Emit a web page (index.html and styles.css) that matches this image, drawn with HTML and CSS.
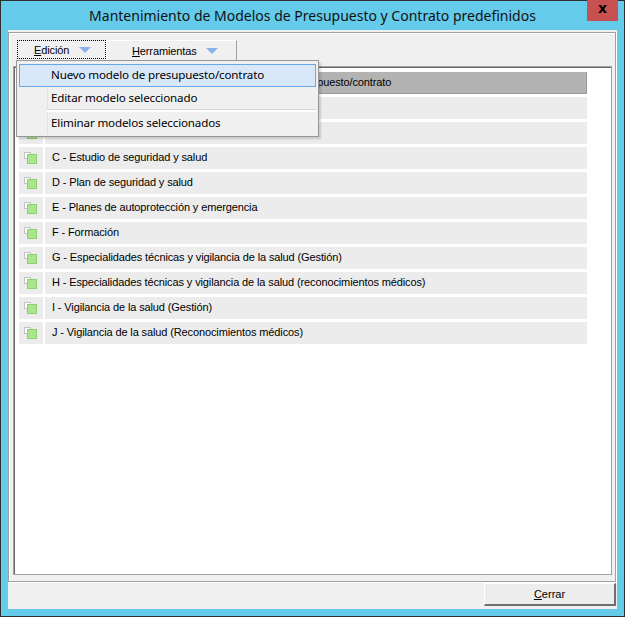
FILE: index.html
```html
<!DOCTYPE html>
<html>
<head>
  <title>Mantenimiento de Modelos</title>
  <link rel="stylesheet" href="styles.css">
</head>
<body>
  <div class="window">
    <div class="titlebar">
      <span class="title">Mantenimiento de Modelos de Presupuesto y Contrato predefinidos</span>
      <span class="close">x</span>
    </div>
    <div class="client">
      <div class="panel">
        <div class="toolbar">
          <div class="tool tool-open"><span><u>E</u>dición</span><i class="arrow"></i></div>
          <div class="tool tool-wide"><span><u>H</u>erramientas</span><i class="arrow"></i></div>
        </div>
        <div class="list">
          <div class="header"><span class="header-text">Modelo de presupuesto/contrato</span></div>
          <div class="rows">
            <div class="check"><svg width="13" height="12"><rect x="0.5" y="0.5" width="6" height="6" fill="#fff" stroke="#c4c4c4"/><rect x="3.5" y="2.5" width="9" height="9" fill="#a9e68f" stroke="#8ed06f"/></svg></div>
            <div class="name"></div>
            <div class="check"><svg width="13" height="12"><rect x="0.5" y="0.5" width="6" height="6" fill="#fff" stroke="#c4c4c4"/><rect x="3.5" y="2.5" width="9" height="9" fill="#a9e68f" stroke="#8ed06f"/></svg></div>
            <div class="name"></div>
            <div class="check"><svg width="13" height="12"><rect x="0.5" y="0.5" width="6" height="6" fill="#fff" stroke="#c4c4c4"/><rect x="3.5" y="2.5" width="9" height="9" fill="#a9e68f" stroke="#8ed06f"/></svg></div>
            <div class="name">C - Estudio de seguridad y salud</div>
            <div class="check"><svg width="13" height="12"><rect x="0.5" y="0.5" width="6" height="6" fill="#fff" stroke="#c4c4c4"/><rect x="3.5" y="2.5" width="9" height="9" fill="#a9e68f" stroke="#8ed06f"/></svg></div>
            <div class="name">D - Plan de seguridad y salud</div>
            <div class="check"><svg width="13" height="12"><rect x="0.5" y="0.5" width="6" height="6" fill="#fff" stroke="#c4c4c4"/><rect x="3.5" y="2.5" width="9" height="9" fill="#a9e68f" stroke="#8ed06f"/></svg></div>
            <div class="name">E - Planes de autoprotección y emergencia</div>
            <div class="check"><svg width="13" height="12"><rect x="0.5" y="0.5" width="6" height="6" fill="#fff" stroke="#c4c4c4"/><rect x="3.5" y="2.5" width="9" height="9" fill="#a9e68f" stroke="#8ed06f"/></svg></div>
            <div class="name">F - Formación</div>
            <div class="check"><svg width="13" height="12"><rect x="0.5" y="0.5" width="6" height="6" fill="#fff" stroke="#c4c4c4"/><rect x="3.5" y="2.5" width="9" height="9" fill="#a9e68f" stroke="#8ed06f"/></svg></div>
            <div class="name">G - Especialidades técnicas y vigilancia de la salud (Gestión)</div>
            <div class="check"><svg width="13" height="12"><rect x="0.5" y="0.5" width="6" height="6" fill="#fff" stroke="#c4c4c4"/><rect x="3.5" y="2.5" width="9" height="9" fill="#a9e68f" stroke="#8ed06f"/></svg></div>
            <div class="name">H - Especialidades técnicas y vigilancia de la salud (reconocimientos médicos)</div>
            <div class="check"><svg width="13" height="12"><rect x="0.5" y="0.5" width="6" height="6" fill="#fff" stroke="#c4c4c4"/><rect x="3.5" y="2.5" width="9" height="9" fill="#a9e68f" stroke="#8ed06f"/></svg></div>
            <div class="name">I - Vigilancia de la salud (Gestión)</div>
            <div class="check"><svg width="13" height="12"><rect x="0.5" y="0.5" width="6" height="6" fill="#fff" stroke="#c4c4c4"/><rect x="3.5" y="2.5" width="9" height="9" fill="#a9e68f" stroke="#8ed06f"/></svg></div>
            <div class="name">J - Vigilancia de la salud (Reconocimientos médicos)</div>
          </div>
        </div>

        <div class="menu">
          <div class="menu-item menu-hover">Nuevo modelo de presupuesto/contrato</div>
          <div class="menu-item">Editar modelo seleccionado</div>
          <div class="menu-sep"></div>
          <div class="menu-item">Eliminar modelos seleccionados</div>
        </div>
      </div>
      <div class="footer">
        <button class="button" type="button"><u>C</u>errar</button>
      </div>
    </div>
  </div>
</body>
</html>
```

FILE: styles.css
```css
body {
  margin: 0;
  background: #fff;
  font-family: "Liberation Sans", Arial, sans-serif;
  font-size: 11px;
  letter-spacing: -0.12px;
  color: #000;
}

.window {
  width: 625px;
  height: 617px;
  box-sizing: border-box;
  border: 1px solid #2e2e2e;
  background-color: #64cbea;
  padding: 0 7px 7px 7px;
  display: flex;
  flex-direction: column;
}

.titlebar {
  height: 29px;
  position: relative;
  display: flex;
  align-items: center;
  justify-content: center;
}
.title {
  font-family: "Noto Sans", sans-serif;
  font-size: 14px;
  letter-spacing: 0;
  color: #111;
  margin-top: -1px;
}
.close {
  position: absolute;
  top: -1px;
  right: -1px;
  width: 31px;
  height: 21px;
  background-color: #c75050;
  color: #000;
  font-family: "DejaVu Sans", sans-serif;
  font-weight: bold;
  font-size: 14px;
  line-height: 17px;
  text-align: center;
}

.client {
  flex: 1;
  background-color: #f0f0f0;
  display: flex;
  flex-direction: column;
}

.panel {
  position: relative;
  flex: 1;
  margin: 2px 1px 1px 0;
  border: 1px solid #a0a0a0;
  box-shadow: inset 1px 1px 0 #fff, 1px 1px 0 #fff;
  padding: 7px 3px 6px 4px;
  display: flex;
  flex-direction: column;
}

.toolbar {
  height: 21px;
  display: flex;
  padding-left: 4px;
  margin-bottom: 5px;
}
.tool {
  height: 21px;
  box-sizing: border-box;
  display: flex;
  align-items: center;
  gap: 9px;
  padding: 0 0 0 25px;
  border-top: 1px solid #fff;
  border-left: 1px solid #fff;
  border-right: 1px solid #a0a0a0;
  border-bottom: 1px solid #a0a0a0;
}
.tool-wide {
  width: 131px;
}
.tool-open {
  width: 89px;
  height: 19px;
  padding: 0 0 0 16px;
  border: 1px dotted #000;
  gap: 10px;
}
.tool u, .button u { text-decoration: underline; }
.arrow {
  width: 0;
  height: 0;
  border-left: 6px solid transparent;
  border-right: 6px solid transparent;
  border-top: 6px solid #8cb1ea;
}

.list {
  flex: 1;
  background: #fff;
  border: 1px solid #a0a0a0;
  box-shadow: inset 1px 1px 0 #696969;
  padding: 5px 0 0 5px;
}
.header {
  width: 568px;
  height: 22px;
  box-sizing: border-box;
  background-color: #b3b3b3;
  border-right: 1px solid #9a9a9a;
  border-bottom: 1px solid #9a9a9a;
  padding-left: 218px;
  line-height: 21px;
}
.rows {
  width: 568px;
  margin-top: 3px;
  display: grid;
  grid-template-columns: 24px 1fr;
  grid-auto-rows: 22px;
  column-gap: 2px;
  row-gap: 3px;
}
.check {
  background-color: #ececec;
  padding: 5px 0 0 5px;
  box-sizing: border-box;
}
.check svg { display: block; }
.name {
  background-color: #ececec;
  padding-left: 7px;
  line-height: 21px;
  white-space: nowrap;
}

.menu {
  position: absolute;
  left: 7px;
  top: 27px;
  width: 303px;
  box-sizing: border-box;
  background-color: #f0f0f0;
  border: 1px solid #979797;
  padding: 3px 2px 2px 2px;
  box-shadow: 2px 2px 2px rgba(0, 0, 0, 0.15);
  font-family: "Noto Sans", sans-serif;
  font-size: 11.6px;
  letter-spacing: -0.15px;
}
.menu-item {
  height: 22px;
  line-height: 20px;
  padding-left: 31px;
  border: 1px solid transparent;
  box-sizing: border-box;
  background: linear-gradient(to right, transparent 27px, #e2e2e2 27px, #e2e2e2 28px, transparent 28px);
}
.menu-hover {
  background: #d9e8f9;
  border-color: #66a9e6;
  height: 23px;
}
.menu-sep {
  height: 3px;
  margin-left: 28px;
  border-top: 1px solid #d7d7d7;
  box-sizing: border-box;
  background: #fff;
  background-clip: content-box;
}

.footer {
  height: 26px;
  display: flex;
  justify-content: flex-end;
  align-items: flex-start;
  padding-right: 1px;
}
.button {
  width: 132px;
  height: 23px;
  background-color: #ededed;
  border-top: 1px solid #fff;
  border-left: 1px solid #fff;
  border-right: 2px solid #6e6e6e;
  border-bottom: 2px solid #6e6e6e;
  font-family: "Liberation Sans", Arial, sans-serif;
  font-size: 11px;
  color: #000;
  padding: 0;
}
```
